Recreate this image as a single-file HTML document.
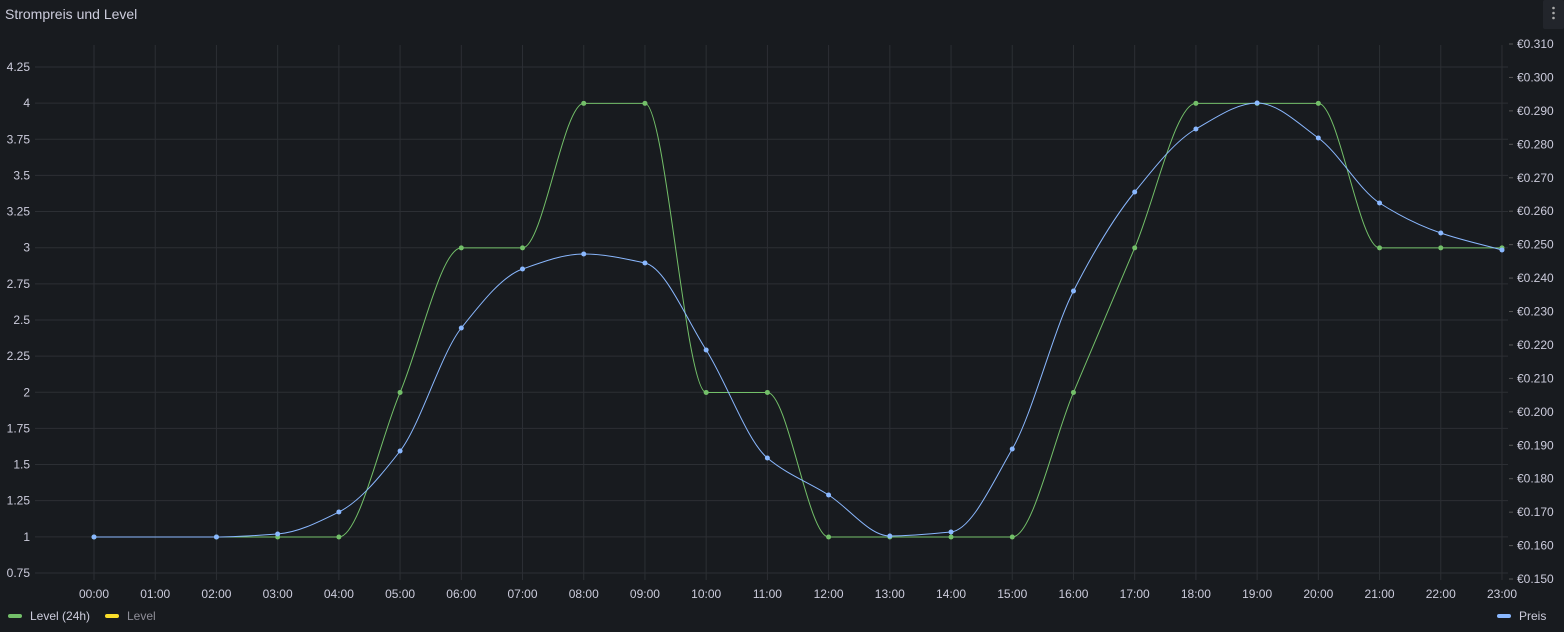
<!DOCTYPE html>
<html><head><meta charset="utf-8"><style>
body{margin:0;background:#181b1f;width:1564px;height:632px;overflow:hidden;font-family:"Liberation Sans",sans-serif;color:#ccccdc}
.t{position:absolute;left:5px;top:6px;font-size:14px;font-weight:500}
.m{position:absolute;right:0;top:0;width:21px;height:29px;background:#22252b;border-radius:2px}
</style></head><body>
<div class="t">Strompreis und Level</div>
<div class="m"><svg width="21" height="29"><circle cx="10.5" cy="8" r="1.3" fill="#aaa"/><circle cx="10.5" cy="13" r="1.3" fill="#aaa"/><circle cx="10.5" cy="18" r="1.3" fill="#aaa"/></svg></div>
<svg id="s" width="1564" height="632" style="position:absolute;left:0;top:0" font-family="Liberation Sans, sans-serif" font-size="12"></svg>
<script>
var s=document.getElementById('s'),h='';
function X(i){return 94+i*61.217;}
// horizontal grid
var lv=['4.25','4','3.75','3.5','3.25','3','2.75','2.5','2.25','2','1.75','1.5','1.25','1','0.75'];
for(var i=0;i<lv.length;i++){var y=67+i*36.14;h+='<line x1="35" x2="1508" y1="'+y+'" y2="'+y+'" stroke="#2c2f34"/>';h+='<text x="30" y="'+(y+4)+'" text-anchor="end" fill="#ccccdc">'+lv[i]+'</text>';}
for(var i=0;i<24;i++){var x=X(i);h+='<line x1="'+x+'" x2="'+x+'" y1="45" y2="580" stroke="#2c2f34"/>';h+='<text x="'+x+'" y="598" text-anchor="middle" fill="#ccccdc">'+(i<10?'0':'')+i+':00</text>';}
for(var i=0;i<=16;i++){var y=44+i*33.44;h+='<line x1="1509" x2="1513" y1="'+y+'" y2="'+y+'" stroke="#555"/>';h+='<text x="1517" y="'+(y+4)+'" fill="#ccccdc">€'+(0.31-i*0.01).toFixed(3)+'</text>';}
function path(p){var n=p.length,d=[],m=[];for(var i=0;i<n-1;i++)d.push((p[i+1][1]-p[i][1])/(p[i+1][0]-p[i][0]));m[0]=d[0];m[n-1]=d[n-2];for(var i=1;i<n-1;i++){if(d[i-1]*d[i]<=0)m[i]=0;else m[i]=3*(d[i-1]+d[i])/((2*d[i]+d[i-1])/d[i-1]+(d[i]+2*d[i-1])/d[i]) ;}
var r='M'+p[0][0]+','+p[0][1];for(var i=0;i<n-1;i++){var dx=(p[i+1][0]-p[i][0])/3;r+='C'+(p[i][0]+dx)+','+(p[i][1]+m[i]*dx)+' '+(p[i+1][0]-dx)+','+(p[i+1][1]-m[i+1]*dx)+' '+p[i+1][0]+','+p[i+1][1];}return r;}
var hrs=[0,2,3,4,5,6,7,8,9,10,11,12,13,14,15,16,17,18,19,20,21,22,23];
var G=[1,1,1,1,2,3,3,4,4,2,2,1,1,1,1,2,3,4,4,4,3,3,3];
var B=[537,537,534,512,451,328,269,254,263,350,458,495,536,532,449,291,192,129,103,138,203,233,250];
var gp=hrs.map(function(t,i){return[X(t),537-(G[i]-1)*144.56];});
var bp=hrs.map(function(t,i){return[X(t),B[i]];});
h+='<path d="'+path(gp)+'" fill="none" stroke="#73bf69" stroke-width="1"/>';
gp.forEach(function(p){h+='<circle cx="'+p[0]+'" cy="'+p[1]+'" r="2.5" fill="#73bf69"/>';});
h+='<path d="'+path(bp)+'" fill="none" stroke="#8ab8ff" stroke-width="1"/>';
bp.forEach(function(p){h+='<circle cx="'+p[0]+'" cy="'+p[1]+'" r="2.5" fill="#8ab8ff"/>';});
h+='<rect x="8" y="614" width="14" height="4" rx="2" fill="#73bf69"/><text x="30" y="620" fill="#ccccdc">Level (24h)</text>';
h+='<rect x="105" y="614" width="14" height="4" rx="2" fill="#fade2a"/><text x="127" y="620" fill="#8e8e98">Level</text>';
h+='<rect x="1497" y="614" width="14" height="4" rx="2" fill="#8ab8ff"/><text x="1519" y="620" fill="#ccccdc">Preis</text>';
s.innerHTML=h;
</script>
</body></html>
